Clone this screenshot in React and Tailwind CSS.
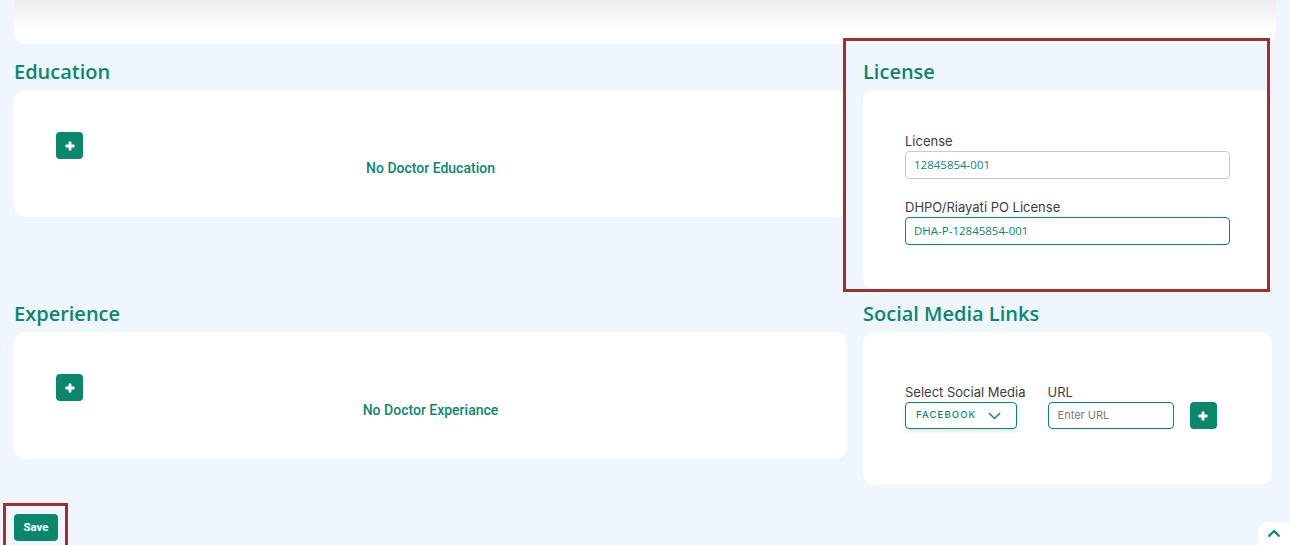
const teal = 'text-[#0b8770]';

function PlusIcon() {
  return (
    <svg width="10" height="10" viewBox="0 0 10 10" fill="white">
      <rect x="3.6" y="0.5" width="2.8" height="9" rx="0.6" />
      <rect x="0.5" y="3.6" width="9" height="2.8" rx="0.6" />
    </svg>
  );
}

function AddButton() {
  return (
    <button className="flex h-[27px] w-[27px] items-center justify-center rounded-[4px] bg-[#0b876c]">
      <PlusIcon />
    </button>
  );
}

function Heading({ children }) {
  return (
    <h2 className="mb-[4px] h-[28px] text-[20px] leading-[28px] font-semibold text-[#0b8770]" style={{ fontFamily: '"Open Sans", sans-serif' }}>
      {children}
    </h2>
  );
}

function EmptyCard({ text }) {
  return (
    <div className="rounded-xl bg-white px-[42px] pt-[42px] pb-[40px]">
      <AddButton />
      <p className={`text-center text-[14px] leading-[18px] font-medium ${teal}`} style={{ fontFamily: 'Roboto, sans-serif' }}>
        {text}
      </p>
    </div>
  );
}

function Field({ label, value, active }) {
  return (
    <div>
      <label className="block text-[13px] leading-[20px] text-[#3d3d3d]" style={{ fontFamily: 'Inter, sans-serif' }}>
        {label}
      </label>
      <div
        className={`flex h-[28px] items-center rounded-[4px] border px-[8px] text-[11.5px] ${teal} ${active ? 'border-[#0b8770]' : 'border-[#c9c9c9]'}`}
        style={{ fontFamily: '"Open Sans", sans-serif' }}
      >
        {value}
      </div>
    </div>
  );
}

export default function App() {
  return (
    <div className="relative min-h-[545px] overflow-hidden bg-[#eff6fe] px-[14px]">
      <div className="relative -mt-[40px] h-[84px] overflow-hidden rounded-b-xl bg-white">
        <div className="absolute inset-x-0 top-[40px] h-[30px] bg-gradient-to-b from-[#ededed] to-white" />
      </div>

      <div className="mt-[14px] grid grid-cols-[833px_409px] gap-x-4 gap-y-[10px]">
        <div>
          <Heading>Education</Heading>
          <EmptyCard text="No Doctor Education" />
        </div>
        <div>
          <Heading>License</Heading>
          <div className="flex h-[200px] flex-col gap-[18px] rounded-xl bg-white px-[42px] pt-[41px]">
            <Field label="License" value="12845854-001" />
            <Field label="DHPO/Riayati PO License" value="DHA-P-12845854-001" active />
          </div>
        </div>

        <div>
          <Heading>Experience</Heading>
          <EmptyCard text="No Doctor Experiance" />
        </div>
        <div>
          <Heading>Social Media Links</Heading>
          <div className="flex items-end rounded-xl bg-white px-[42px] pt-[50px] pb-[56px]" style={{ fontFamily: 'Inter, sans-serif' }}>
            <div>
              <label className="block text-[13px] leading-[20px] text-[#3d3d3d]">Select Social Media</label>
              <div className="flex h-[27px] w-[112px] items-center justify-between rounded-[4px] border border-[#0b8770] bg-white pr-[15px] pl-[10px] shadow-[0_2px_4px_rgba(0,0,0,0.12)]">
                <span className={`text-[9.5px] font-medium tracking-[0.12em] ${teal}`}>FACEBOOK</span>
                <svg width="13" height="8" viewBox="0 0 13 8" fill="none" stroke="#0b8770" strokeWidth="1.5">
                  <path d="M1 1l5.5 5.5L12 1" />
                </svg>
              </div>
            </div>
            <div className="ml-[22px]">
              <label className="block text-[13px] leading-[20px] text-[#3d3d3d]">URL</label>
              <div className="flex h-[27px] w-[126px] items-center rounded-[4px] border border-[#0b8770] px-[9px] text-[11px] text-[#7a7a7a]">
                Enter URL
              </div>
            </div>
            <div className="ml-[16px]">
              <AddButton />
            </div>
          </div>
        </div>
      </div>

      <button
        className="mt-[29px] flex h-[27px] w-[44px] items-center justify-center rounded-[4px] bg-[#0b876c] text-[11.5px] font-bold text-white"
        style={{ fontFamily: 'Roboto, sans-serif' }}
      >
        Save
      </button>

      <div className="pointer-events-none absolute top-[38px] left-[843px] h-[254px] w-[427px] border-[3px] border-[#a52d2f]" />
      <div className="pointer-events-none absolute top-[503px] left-[3px] h-[50px] w-[65px] border-[3px] border-[#a52d2f]" />

      <div className="absolute right-0 bottom-0 flex h-[23px] w-[32px] items-center justify-center rounded-tl-[10px] bg-white">
        <svg width="14" height="9" viewBox="0 0 14 9" fill="none" stroke="#0b8770" strokeWidth="2.2">
          <path d="M1.5 7.5L7 2l5.5 5.5" />
        </svg>
      </div>
    </div>
  );
}
